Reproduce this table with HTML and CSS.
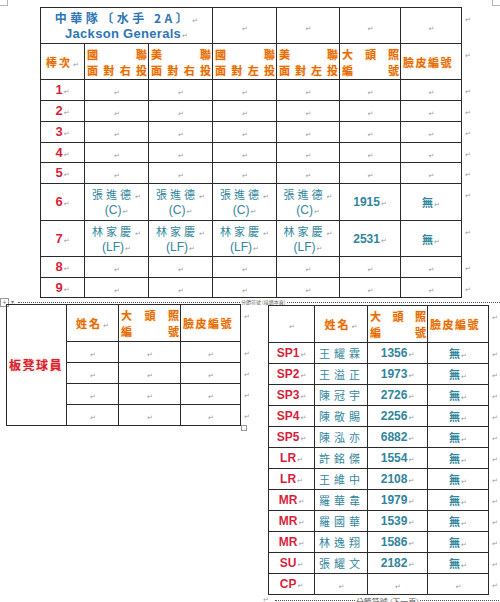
FILE: index.html
```html
<!DOCTYPE html>
<html lang="zh-Hant">
<head>
<meta charset="utf-8">
<title>中華隊 Jackson Generals</title>
<link rel="stylesheet" href="styles.css">
</head>
<body>
<div class="crop crop-l"></div>
<div class="crop crop-r"></div>

<div class="top">
<table class="t-main">
<colgroup><col class="c44"><col class="c64"><col class="c64"><col class="c64"><col class="c63"><col class="c61"><col class="c61"><col class="ceor"></colgroup>
<tr class="h36">
  <td colspan="3" class="title"><div class="tl1">中華隊〔水手 2A〕<i>↵</i></div><div class="tl2">Jackson Generals<i>↵</i></div></td>
  <td class="m"><i>↵</i></td><td class="m"><i>↵</i></td><td class="m"><i>↵</i></td><td class="m"><i>↵</i></td><td class="eor"><i>↵</i></td>
</tr>
<tr class="h36">
  <td class="hd">棒次<i>↵</i></td>
  <td class="hd dist"><div class="dl"><span>國</span><span>聯</span></div><div class="dl"><span>面</span><span>對</span><span>右</span><span>投</span></div></td>
  <td class="hd dist"><div class="dl"><span>美</span><span>聯</span></div><div class="dl"><span>面</span><span>對</span><span>右</span><span>投</span></div></td>
  <td class="hd dist"><div class="dl"><span>國</span><span>聯</span></div><div class="dl"><span>面</span><span>對</span><span>左</span><span>投</span></div></td>
  <td class="hd dist"><div class="dl"><span>美</span><span>聯</span></div><div class="dl"><span>面</span><span>對</span><span>左</span><span>投</span></div></td>
  <td class="hd dist"><div class="dl"><span>大</span><span>頭</span><span>照</span></div><div class="dl"><span>編</span><span>號</span></div></td>
  <td class="hd face">臉皮編號</td>
  <td class="eor"><i>↵</i></td>
</tr>
<tr class="h21"><td class="num">1<i>↵</i></td><td class="m"><i>↵</i></td><td class="m"><i>↵</i></td><td class="m"><i>↵</i></td><td class="m"><i>↵</i></td><td class="m"><i>↵</i></td><td class="m"><i>↵</i></td><td class="eor"><i>↵</i></td></tr>
<tr class="h21"><td class="num">2<i>↵</i></td><td class="m"><i>↵</i></td><td class="m"><i>↵</i></td><td class="m"><i>↵</i></td><td class="m"><i>↵</i></td><td class="m"><i>↵</i></td><td class="m"><i>↵</i></td><td class="eor"><i>↵</i></td></tr>
<tr class="h21"><td class="num">3<i>↵</i></td><td class="m"><i>↵</i></td><td class="m"><i>↵</i></td><td class="m"><i>↵</i></td><td class="m"><i>↵</i></td><td class="m"><i>↵</i></td><td class="m"><i>↵</i></td><td class="eor"><i>↵</i></td></tr>
<tr class="h20"><td class="num">4<i>↵</i></td><td class="m"><i>↵</i></td><td class="m"><i>↵</i></td><td class="m"><i>↵</i></td><td class="m"><i>↵</i></td><td class="m"><i>↵</i></td><td class="m"><i>↵</i></td><td class="eor"><i>↵</i></td></tr>
<tr class="h21"><td class="num">5<i>↵</i></td><td class="m"><i>↵</i></td><td class="m"><i>↵</i></td><td class="m"><i>↵</i></td><td class="m"><i>↵</i></td><td class="m"><i>↵</i></td><td class="m"><i>↵</i></td><td class="eor"><i>↵</i></td></tr>
<tr class="h37">
  <td class="num">6<i>↵</i></td>
  <td class="pl"><div>張進德<i>↵</i></div><div class="pos">(C)<i>↵</i></div></td>
  <td class="pl"><div>張進德<i>↵</i></div><div class="pos">(C)<i>↵</i></div></td>
  <td class="pl"><div>張進德<i>↵</i></div><div class="pos">(C)<i>↵</i></div></td>
  <td class="pl"><div>張進德<i>↵</i></div><div class="pos">(C)<i>↵</i></div></td>
  <td class="pid">1915<i>↵</i></td>
  <td class="none">無<i>↵</i></td>
  <td class="eor"><i>↵</i></td>
</tr>
<tr class="h36">
  <td class="num">7<i>↵</i></td>
  <td class="pl"><div>林家慶<i>↵</i></div><div class="pos">(LF)<i>↵</i></div></td>
  <td class="pl"><div>林家慶<i>↵</i></div><div class="pos">(LF)<i>↵</i></div></td>
  <td class="pl"><div>林家慶<i>↵</i></div><div class="pos">(LF)<i>↵</i></div></td>
  <td class="pl"><div>林家慶<i>↵</i></div><div class="pos">(LF)<i>↵</i></div></td>
  <td class="pid">2531<i>↵</i></td>
  <td class="none">無<i>↵</i></td>
  <td class="eor"><i>↵</i></td>
</tr>
<tr class="h21"><td class="num">8<i>↵</i></td><td class="m"><i>↵</i></td><td class="m"><i>↵</i></td><td class="m"><i>↵</i></td><td class="m"><i>↵</i></td><td class="m"><i>↵</i></td><td class="m"><i>↵</i></td><td class="eor"><i>↵</i></td></tr>
<tr class="h20"><td class="num">9<i>↵</i></td><td class="m"><i>↵</i></td><td class="m"><i>↵</i></td><td class="m"><i>↵</i></td><td class="m"><i>↵</i></td><td class="m"><i>↵</i></td><td class="m"><i>↵</i></td><td class="eor"><i>↵</i></td></tr>
</table>
</div>

<div class="break1"><span class="brlabel">分節符號 (接續本頁)</span></div>
<div class="handle"><span class="plus">+</span><span class="caret">▾</span></div>

<div class="lower">
  <div class="col-left">
    <table class="t-bench">
      <colgroup><col class="c60"><col class="c52"><col class="c62"><col class="c60"><col class="ceor"></colgroup>
      <tr class="h37">
        <td rowspan="5" class="bench">板凳球員</td>
        <td class="hd">姓名<i>↵</i></td>
        <td class="hd dist"><div class="dl"><span>大</span><span>頭</span><span>照</span></div><div class="dl"><span>編</span><span>號</span></div></td>
        <td class="hd face">臉皮編號</td>
        <td class="eor"><i>↵</i></td>
      </tr>
      <tr class="h21"><td class="m"><i>↵</i></td><td class="m"><i>↵</i></td><td class="m"><i>↵</i></td><td class="eor"><i>↵</i></td></tr>
      <tr class="h21"><td class="m"><i>↵</i></td><td class="m"><i>↵</i></td><td class="m"><i>↵</i></td><td class="eor"><i>↵</i></td></tr>
      <tr class="h21"><td class="m"><i>↵</i></td><td class="m"><i>↵</i></td><td class="m"><i>↵</i></td><td class="eor"><i>↵</i></td></tr>
      <tr class="h21"><td class="m"><i>↵</i></td><td class="m"><i>↵</i></td><td class="m"><i>↵</i></td><td class="eor"><i>↵</i></td></tr>
    </table>
    <div class="resize"></div>
  </div>

  <div class="col-right">
    <table class="t-pit">
      <colgroup><col class="c46"><col class="c53"><col class="c60"><col class="c61"><col class="ceor"></colgroup>
      <tr class="h37">
        <td class="m"><i>↵</i></td>
        <td class="hd">姓名<i>↵</i></td>
        <td class="hd dist"><div class="dl"><span>大</span><span>頭</span><span>照</span></div><div class="dl"><span>編</span><span>號</span></div></td>
        <td class="hd face">臉皮編號</td>
        <td class="eor"><i>↵</i></td>
      </tr>
      <tr class="h21"><td class="role">SP1<i>↵</i></td><td class="nm">王耀霖</td><td class="pid">1356<i>↵</i></td><td class="none">無<i>↵</i></td><td class="eor"><i>↵</i></td></tr>
      <tr class="h21"><td class="role">SP2<i>↵</i></td><td class="nm">王溢正</td><td class="pid">1973<i>↵</i></td><td class="none">無<i>↵</i></td><td class="eor"><i>↵</i></td></tr>
      <tr class="h21"><td class="role">SP3<i>↵</i></td><td class="nm">陳冠宇</td><td class="pid">2726<i>↵</i></td><td class="none">無<i>↵</i></td><td class="eor"><i>↵</i></td></tr>
      <tr class="h21"><td class="role">SP4<i>↵</i></td><td class="nm">陳敬賜</td><td class="pid">2256<i>↵</i></td><td class="none">無<i>↵</i></td><td class="eor"><i>↵</i></td></tr>
      <tr class="h21"><td class="role">SP5<i>↵</i></td><td class="nm">陳泓亦</td><td class="pid">6882<i>↵</i></td><td class="none">無<i>↵</i></td><td class="eor"><i>↵</i></td></tr>
      <tr class="h21"><td class="role">LR<i>↵</i></td><td class="nm">許銘傑</td><td class="pid">1554<i>↵</i></td><td class="none">無<i>↵</i></td><td class="eor"><i>↵</i></td></tr>
      <tr class="h21"><td class="role">LR<i>↵</i></td><td class="nm">王維中</td><td class="pid">2108<i>↵</i></td><td class="none">無<i>↵</i></td><td class="eor"><i>↵</i></td></tr>
      <tr class="h21"><td class="role">MR<i>↵</i></td><td class="nm">羅華韋</td><td class="pid">1979<i>↵</i></td><td class="none">無<i>↵</i></td><td class="eor"><i>↵</i></td></tr>
      <tr class="h21"><td class="role">MR<i>↵</i></td><td class="nm">羅國華</td><td class="pid">1539<i>↵</i></td><td class="none">無<i>↵</i></td><td class="eor"><i>↵</i></td></tr>
      <tr class="h21"><td class="role">MR<i>↵</i></td><td class="nm">林逸翔</td><td class="pid">1586<i>↵</i></td><td class="none">無<i>↵</i></td><td class="eor"><i>↵</i></td></tr>
      <tr class="h21"><td class="role">SU<i>↵</i></td><td class="nm">張耀文</td><td class="pid">2182<i>↵</i></td><td class="none">無<i>↵</i></td><td class="eor"><i>↵</i></td></tr>
      <tr class="h21"><td class="role">CP<i>↵</i></td><td class="m"><i>↵</i></td><td class="m"><i>↵</i></td><td class="m"><i>↵</i></td><td class="eor"><i>↵</i></td></tr>
    </table>
    <div class="break2"><i>↵</i><span class="dots"><span class="brlabel2">分節符號 (下一頁)</span></span></div>
  </div>
</div>
</body>
</html>
```

FILE: styles.css
```css
html, body {
  margin: 0;
  padding: 0;
}
body {
  width: 500px;
  height: 602px;
  overflow: hidden;
  background: #ffffff;
  position: relative;
  font-family: "Liberation Sans", "Noto Sans CJK TC", sans-serif;
  color: #222;
}

/* Word paragraph marks */
i {
  font-style: normal;
  font-family: "DejaVu Sans", sans-serif;
  font-size: 7px;
  line-height: 0;
  color: #9a9a9a;
  font-weight: normal;
  letter-spacing: 0;
  text-shadow: none;
  margin-left: 1px;
}

/* crop marks */
.crop {
  position: absolute;
  top: 0;
  width: 7px;
  height: 5px;
  border-bottom: 1px solid #b5b5b5;
}
.crop-l { left: 0; border-right: 1px solid #b5b5b5; }
.crop-r { right: 0; border-left: 1px solid #b5b5b5; }

table {
  border-collapse: collapse;
  table-layout: fixed;
}
td {
  border: 1px solid #2a2a2a;
  padding: 0 2px;
  text-align: center;
  vertical-align: middle;
  overflow: hidden;
  white-space: nowrap;
  line-height: 14px;
}
td.eor {
  border: none;
  text-align: left;
  vertical-align: top;
  padding: 3px 0 0 2px;
  line-height: 12px;
  overflow: visible;
}

.c44 { width: 44px; }
.c46 { width: 46px; }
.c52 { width: 52px; }
.c53 { width: 53px; }
.c60 { width: 60px; }
.c61 { width: 61px; }
.c62 { width: 62px; }
.c63 { width: 63px; }
.c64 { width: 64px; }
.ceor { width: 14px; }

.h20 { height: 20px; }
.h21 { height: 21px; }
.h36 { height: 36px; }
.h37 { height: 37px; }

/* top table */
.top {
  padding: 7px 0 0 40px;
  height: 291px;
}
.t-main { width: 435px; }

.title {
  color: #2e75b6;
  text-align: center;
  padding: 0;
}
.tl1 {
  font-family: "Noto Sans CJK TC", sans-serif;
  font-weight: 700;
  font-size: 12px;
  letter-spacing: 3.5px;
  line-height: 16px;
}
.tl2 {
  font-family: "Liberation Sans", sans-serif;
  font-weight: 700;
  font-size: 13px;
  line-height: 16px;
  letter-spacing: 0.3px;
}

.hd {
  font-family: "Noto Sans CJK TC", sans-serif;
  color: #e46c0a;
  font-size: 11px;
  font-weight: 700;
  letter-spacing: 2px;
  text-shadow: 0 0 2px rgba(255, 190, 110, 0.8);
}
.hd.dist {
  padding: 0 1px 0 2px;
  letter-spacing: 0;
}
.dl {
  display: flex;
  justify-content: space-between;
  line-height: 16px;
}
.hd.face {
  letter-spacing: 1.5px;
  padding: 0 0 0 2px;
  text-align: left;
}

.num {
  color: #d81f3c;
  font-weight: 700;
  font-size: 13px;
  text-align: center;
}

.pl {
  color: #31859c;
  font-family: "Noto Sans CJK TC", sans-serif;
  font-size: 11px;
  letter-spacing: 3px;
  line-height: 16px;
}
.pl .pos {
  font-family: "Liberation Sans", sans-serif;
  font-size: 12px;
  letter-spacing: 0;
}

.pid {
  color: #31859c;
  font-weight: 700;
  font-size: 12px;
}
.none {
  color: #31859c;
  font-family: "Noto Sans CJK TC", sans-serif;
  font-size: 11px;
  font-weight: 700;
}

/* section break lines */
.break1 {
  margin: 4px 0 0 18px;
  height: 0;
  border-top: 1px dotted #555;
  position: relative;
}
.brlabel {
  position: absolute;
  left: 222px;
  top: -4px;
  font-family: "Noto Sans CJK TC", sans-serif;
  font-size: 5px;
  line-height: 6px;
  color: #666;
  background: #fff;
  padding: 0 1px;
}

.handle {
  position: absolute;
  left: 0;
  top: 298px;
  width: 7px;
  height: 7px;
  border: 1px solid #999;
  font-size: 7px;
  line-height: 7px;
  color: #777;
  text-align: center;
}
.handle .plus { display: block; }
.handle .caret {
  position: absolute;
  left: 10px;
  top: 0;
  font-size: 6px;
  color: #777;
}

.lower {
  display: flex;
  align-items: flex-start;
}
.col-left {
  margin: 1px 0 0 6px;
  position: relative;
}
.col-right {
  margin: 2px 0 0 13px;
}
.t-bench { width: 248px; }
.t-pit { width: 234px; }

.bench {
  font-family: "Noto Sans CJK TC", sans-serif;
  color: #d81f2c;
  font-size: 12px;
  font-weight: 700;
  letter-spacing: 1.5px;
  text-align: left;
  padding-left: 2px;
  text-shadow: 0 0 2px rgba(255, 120, 120, 0.7);
}

.resize {
  position: absolute;
  left: 235px;
  top: 121px;
  width: 4px;
  height: 4px;
  border: 1px solid #999;
}

.role {
  color: #d81f3c;
  font-weight: 700;
  font-size: 12px;
  text-align: center;
}
.nm {
  color: #31859c;
  font-family: "Noto Sans CJK TC", sans-serif;
  font-size: 11px;
  letter-spacing: 4px;
  text-align: left;
  padding-left: 4px;
}

.break2 {
  display: flex;
  align-items: center;
  margin: 1px 0 0 -6px;
  height: 8px;
}
.dots {
  flex: 1;
  border-top: 1px dotted #555;
  position: relative;
  margin-left: 6px;
  height: 0;
}
.brlabel2 {
  position: absolute;
  left: 80px;
  top: -4px;
  font-family: "Noto Sans CJK TC", sans-serif;
  font-size: 8px;
  line-height: 9px;
  color: #555;
  background: #fff;
  padding: 0 1px;
}
```
